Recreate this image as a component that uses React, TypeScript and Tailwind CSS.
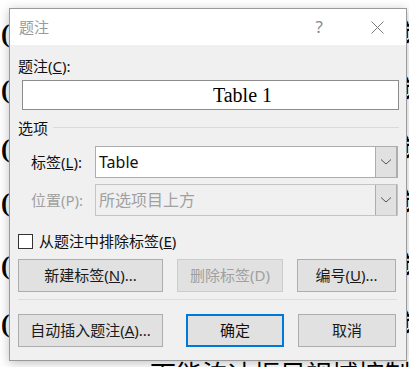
import React from "react";

const ui = "font-['Noto_Sans','Noto_Sans_CJK_SC',sans-serif]";

const Btn = ({
  children,
  w,
  disabled,
  primary,
}: {
  children: React.ReactNode;
  w: string;
  disabled?: boolean;
  primary?: boolean;
}) => (
  <div
    className={`${w} h-[33px] flex items-center justify-center text-[15px] bg-[#e1e1e1] ${
      primary
        ? "border-2 border-[#0078d7]"
        : disabled
          ? "border border-[#cccccc] text-[#a0a0a0]"
          : "border border-[#adadad] text-[#1a1a1a]"
    }`}
  >
    {children}
  </div>
);

const Chevron = () => (
  <svg width="12" height="8" viewBox="0 0 12 8">
    <path d="M1 1.5 L6 6 L11 1.5" fill="none" stroke="#555" strokeWidth="1" />
  </svg>
);

const Combo = ({ value, disabled }: { value: string; disabled?: boolean }) => (
  <div
    className={`flex w-[303px] h-[32px] border border-[#adadad] ${
      disabled ? "bg-[#f0f0f0] border-[#c4c4c4]" : "bg-white"
    }`}
  >
    <div
      className={`flex-1 flex items-center pl-[3px] text-[16px] ${
        disabled ? "text-[#a0a0a0]" : "text-[#111]"
      }`}
    >
      {value}
    </div>
    <div className="w-[22px] bg-[#e1e1e1] border-l border-r border-[#adadad] flex items-center justify-center">
      <Chevron />
    </div>
  </div>
);

const docLines = [
  { mt: "mt-[20px]", t: "(一）系统能够适应各种环境下的视觉需求并保持稳定" },
  { mt: "mt-[28px]", t: "(二）系统能够适应各种环境下的视觉需求并保持稳定" },
  { mt: "mt-[31px]", t: "(三）系统能够适应各种环境下的视觉需求并保持稳定" },
  { mt: "mt-[26px]", t: "(四）系统能够适应各种环境下的视觉需求并保持稳定" },
  { mt: "mt-[35px]", t: "(五）系统能够适应各种环境下的视觉需求并保持稳定" },
  { mt: "mt-[30px]", t: "(六）系统能够适应各种环境下的视觉需求并保持稳定" },
];

export default function App() {
  return (
    <div className="relative w-[409px] h-[367px] overflow-hidden bg-white">
      {/* document page behind the dialog */}
      <div className="flex flex-col font-['Liberation_Serif','Noto_Sans_CJK_SC',serif] text-black">
        {docLines.map((l, i) => (
          <div
            key={i}
            className={`${l.mt} h-[28px] pl-[1px] text-[26px] leading-[28px] font-bold whitespace-nowrap`}
          >
            {l.t}
          </div>
        ))}
        <div className="mt-[24px] pl-[150px] text-[26px] leading-[28px] whitespace-nowrap">
          下能泊冲振目视域控制
        </div>
      </div>

      {/* dialog */}
      <div
        className={`absolute left-[9px] top-[8px] w-[398px] h-[353px] border border-[#9a9a9a] bg-[#f0f0f0] shadow-[0_2px_10px_rgba(0,0,0,0.25)] flex flex-col ${ui}`}
      >
        <div className="h-[36px] bg-white flex items-center pl-[9px] pr-[22px] text-[15px] text-[#9a9a9a]">
          <span className="flex-1">题注</span>
          <span className="text-[17px] text-[#8a8a8a] mr-[48px]">?</span>
          <svg width="13" height="13" viewBox="0 0 13 13">
            <path d="M0.5 0.5 L12.5 12.5 M12.5 0.5 L0.5 12.5" stroke="#7a7a7a" strokeWidth="1" />
          </svg>
        </div>

        <div className="flex flex-col pl-[8px] pr-[7px] text-[15px] text-[#111]">
          <div className="mt-[11px] h-[20px] leading-[20px]">
            题注(<span className="underline">C</span>):
          </div>
          <div className="mt-[4px] ml-[4px] h-[30px] pl-[64px] bg-white border border-[#8c8c8c] flex items-center justify-center font-['Liberation_Serif',serif] text-[20px] text-black">
            Table 1
          </div>

          <div className="mt-[9px] flex items-center h-[18px]">
            <span>选项</span>
            <div className="flex-1 ml-[5px] mt-[-2px] border-t border-[#d9d9d9]" />
          </div>

          <div className="mt-[9px] flex items-center">
            <span className="ml-[13px] w-[64px]">
              标签(<span className="underline">L</span>):
            </span>
            <Combo value="Table" />
          </div>
          <div className="mt-[6px] flex items-center">
            <span className="ml-[13px] w-[64px] text-[#a0a0a0]">位置(P):</span>
            <Combo value="所选项目上方" disabled />
          </div>

          <div className="mt-[17px] flex items-center h-[16px]">
            <div className="w-[15px] h-[15px] border border-[#333] bg-white" />
            <span className="ml-[6px]">
              从题注中排除标签(<span className="underline">E</span>)
            </span>
          </div>

          <div className="mt-[10px] flex">
            <Btn w="w-[145px]">
              新建标签(<span className="underline">N</span>)...
            </Btn>
            <div className="ml-[14px]">
              <Btn w="w-[106px]" disabled>
                删除标签(D)
              </Btn>
            </div>
            <div className="ml-[14px]">
              <Btn w="w-[99px]">
                编号(<span className="underline">U</span>)...
              </Btn>
            </div>
          </div>

          <div className="mt-[7px] mr-[2px] border-t border-[#dcdcdc]" />

          <div className="mt-[14px] flex">
            <Btn w="w-[145px]">
              自动插入题注(<span className="underline">A</span>)...
            </Btn>
            <div className="ml-[23px]">
              <Btn w="w-[98px]" primary>
                确定
              </Btn>
            </div>
            <div className="ml-[14px]">
              <Btn w="w-[98px]">取消</Btn>
            </div>
          </div>
        </div>
      </div>
    </div>
  );
}
